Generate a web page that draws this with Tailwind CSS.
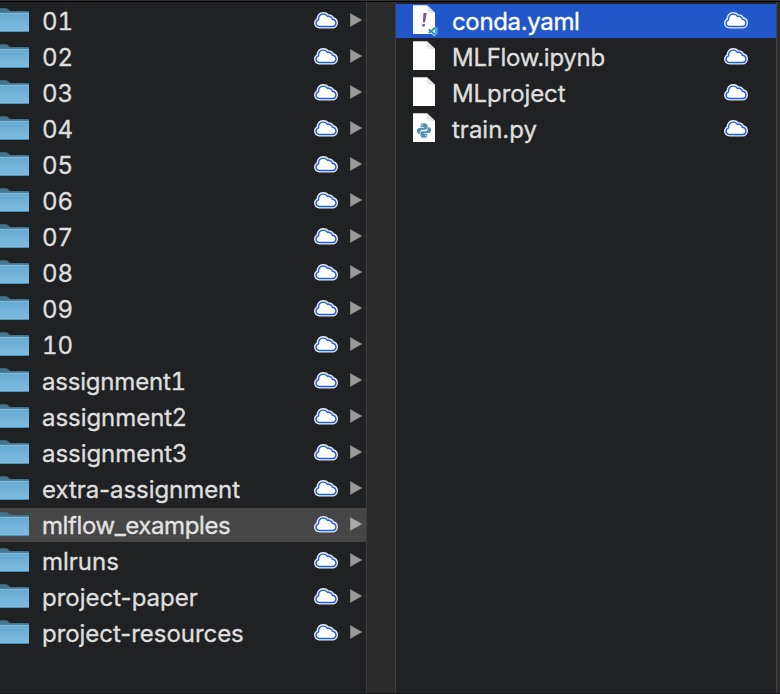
<!DOCTYPE html>
<html lang="en">
<head>
<meta charset="utf-8">
<title>Finder columns</title>
<script src="https://cdn.jsdelivr.net/npm/@tailwindcss/browser@4"></script>
</head>
<body class="h-[694px] w-[780px] overflow-hidden bg-[#1f2122] font-['Inter',sans-serif] text-[24px] text-[#dedede] [-webkit-text-stroke:0.35px_currentColor]">
<svg class="absolute h-0 w-0">
  <defs>
    <linearGradient id="blue" x1="0" y1="0" x2="0" y2="1"><stop offset="0" stop-color="#66a9d3"/><stop offset="1" stop-color="#80bce1"/></linearGradient>
    <linearGradient id="fold" x1="0" y1="1" x2="1" y2="0"><stop offset="0" stop-color="#f8f8f8"/><stop offset="1" stop-color="#bcbcbc"/></linearGradient>
  </defs>
  <symbol id="folder" viewBox="0 0 30 28">
    <path d="M0 1.300H6.500C8 1.300 8.600 4 10.500 4H28Q29 4 29 5V8H0Z" fill="#45758f"/>
    <path d="M0 5.700H29V24Q29 25 28 25H0Z" fill="url(#blue)"/>
    <path d="M0 6.500H29" stroke="#80bce0" stroke-width="1"/>
    <path d="M0 24.500H28.500" stroke="#4f91ba" stroke-width="1"/>
  </symbol>
  <symbol id="cloud" viewBox="0 0 24 17">
    <path d="M5.500 14.400C3.500 14.400 2.100 13.100 2.100 11.300C2.100 9.700 3.100 8.400 4.600 7.900C4.200 4.500 6.200 2.100 9.200 2.100C11.200 2.100 12.700 3 13.500 4.400C16 3.900 17.900 5.200 18.200 7.200C20.400 7.400 21.900 8.900 21.900 10.900C21.900 12.900 20.400 14.400 18.300 14.400Z" fill="#fff" stroke="#e9edf2" stroke-width="4.200" stroke-linejoin="round"/>
    <path d="M5.500 14.400C3.500 14.400 2.100 13.100 2.100 11.300C2.100 9.700 3.100 8.400 4.600 7.900C4.200 4.500 6.200 2.100 9.200 2.100C11.200 2.100 12.700 3 13.500 4.400C16 3.900 17.900 5.200 18.200 7.200C20.400 7.400 21.900 8.900 21.900 10.900C21.900 12.900 20.400 14.400 18.300 14.400Z" fill="#fff" stroke="#2461e4" stroke-width="1.450" stroke-linejoin="round"/>
  </symbol>
  <symbol id="arrow" viewBox="0 0 12 14"><path d="M0.300 0.500L11.700 7L0.300 13.500Z" fill="currentColor" stroke="currentColor" stroke-width=".5" stroke-linejoin="round"/></symbol>
  <symbol id="page" viewBox="0 0 28 32">
    <path d="M1 0.300H15L23 7.800V29H1Z" fill="#fff"/>
    <path d="M15 0.300V6.800Q15 7.800 16 7.800H23Z" fill="url(#fold)"/>
  </symbol>
  <symbol id="yaml" viewBox="0 0 28 32">
    <use href="#page"/>
    <path d="M11.400 8H14.700L13 17.500H10.900ZM10.500 19H13L12.500 21.600H10Z" fill="#8050a4"/>
    <path d="M23.500 22L17 28.200M17 24.500L23.500 30" stroke="#fff" stroke-width="3"/>
    <path d="M23.500 22.500L16.700 28.200M16.700 24.500L23.500 29.800" fill="none" stroke="#2186c8" stroke-width="1.700"/>
    <path d="M23 21.500L25.700 22.700V29.200L23 30.500Z" fill="#45a5e5"/>
  </symbol>
  <symbol id="python" viewBox="0 0 28 32">
    <use href="#page"/>
    <g transform="translate(0 -1.700)">
      <g fill="#508eaf">
        <path id="snake" d="M11.900 12C9.700 12 8.600 12.800 8.600 14.300V15.900H12.200V16.600H7.300C5.700 16.600 5 17.900 5 19.600C5 21.300 5.800 22.500 7.300 22.500H8.300V20.700C8.300 19.200 9.400 18.400 10.700 18.400H13.300C14.700 18.400 15.500 17.500 15.500 16.200V14.300C15.500 12.700 14.200 12 11.900 12Z"/>
        <use href="#snake" transform="rotate(180 12 19.200)"/>
      </g>
      <circle cx="10.200" cy="13.900" r=".7" fill="#fff"/><circle cx="13.800" cy="24.500" r=".7" fill="#fff"/>
    </g>
  </symbol>
</svg>
<div class="flex h-full flex-col">
  <div class="h-px shrink-0 bg-[#303233]"></div>
  <div class="h-px shrink-0 bg-black"></div>
  <div class="flex min-h-0 flex-1">
    <ul id="folders" class="flex w-[366px] shrink-0 flex-col gap-[2px] pt-[2px]"></ul>
    <div class="w-[30px] shrink-0 border-x border-[#3b3d3e] bg-[#2b2b2b]"></div>
    <ul id="files" class="flex w-[380px] shrink-0 flex-col gap-[2px] pt-[2px]"></ul>
    <div class="w-1 shrink-0 border-l border-[#454545] bg-[#2b2b2b]"></div>
  </div>
  <div class="h-px shrink-0 bg-[#17181a]"></div>
</div>
<script>
const folders = [
  ...['01','02','03','04','05','06','07','08','09','10'].map(n => [n, 'tabular-nums']),
  ['assignment1','tabular-nums tracking-[-0.2px]'],['assignment2','tracking-[-0.05px]'],['assignment3','tracking-[-0.05px]'],
  ['extra-assignment','tracking-[-0.06px]'],['mlflow_examples','tracking-[-0.4px]'],['mlruns','tracking-[0px]'],
  ['project-paper','tracking-[0px]'],['project-resources','tracking-[-0.05px]']
];
document.getElementById('folders').innerHTML = folders.map(([name, t]) => `
  <li class="flex h-[34px] shrink-0 items-center ${name === 'mlflow_examples' ? 'bg-[#464646] text-[#e2e2e2]' : ''}">
    <svg class="h-7 w-[30px] shrink-0"><use href="#folder"/></svg>
    <span class="ml-3 w-[272px] shrink-0 whitespace-nowrap pt-[2px] leading-[34px] ${t}">${name}</span>
    <svg class="mb-px h-[17px] w-6 shrink-0"><use href="#cloud"/></svg>
    <svg class="mb-[2px] ml-3 h-3.5 w-3 shrink-0 ${name === 'mlflow_examples' ? 'text-[#aaaaaa]' : 'text-[#999a9a]'}"><use href="#arrow"/></svg>
  </li>`).join('');
const files = [['conda.yaml','yaml','tracking-[-0.35px]'],['MLFlow.ipynb','page','tracking-[-0.3px]'],['MLproject','page','tracking-[-0.1px]'],['train.py','python','tracking-[0px]']];
document.getElementById('files').innerHTML = files.map(([name, icon, t], i) => `
  <li class="flex h-[34px] shrink-0 items-center pl-4 ${i === 0 ? 'bg-[#2257c9] text-white' : ''}">
    <svg class="h-8 w-7 shrink-0"><use href="#${icon}"/></svg>
    <span class="ml-3 w-[272px] shrink-0 whitespace-nowrap pt-[2px] leading-[34px] ${t}">${name}</span>
    <svg class="mb-px h-[17px] w-6 shrink-0"><use href="#cloud"/></svg>
  </li>`).join('');
</script>
</body>
</html>
